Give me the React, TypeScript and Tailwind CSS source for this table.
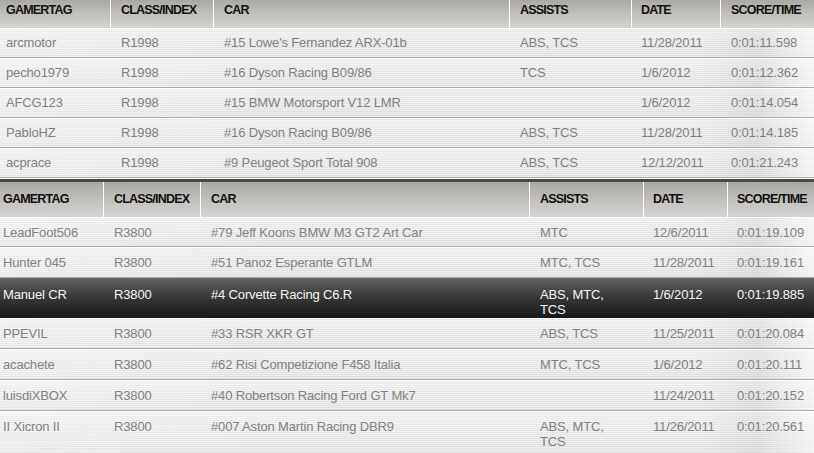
import React from "react";

const ROW_BG =
  "bg-[image:linear-gradient(90deg,rgba(255,255,255,0.25)_0%,rgba(255,255,255,0)_35%,rgba(0,0,0,0)_86%,rgba(0,0,0,0.04)_93%,rgba(255,255,255,0.55)_100%),repeating-linear-gradient(180deg,rgba(255,255,255,0.45)_0px,rgba(255,255,255,0.45)_1px,rgba(0,0,0,0)_1px,rgba(0,0,0,0)_2px),linear-gradient(180deg,#ebebeb,#dddddd)]";
const DARK_BG =
  "bg-[image:linear-gradient(180deg,#636363_0%,#3a3a3a_45%,#181818_100%)]";
const HEAD_BG =
  "bg-[image:linear-gradient(180deg,#aaa8a3_0%,#c4c2be_55%,#d6d4d1_100%)]";

const HEADERS = ["GAMERTAG", "CLASS/INDEX", "CAR", "ASSISTS", "DATE", "SCORE/TIME"];

const topCols = [
  "w-[110px] pl-[6px]",
  "w-[103px] pl-[11px]",
  "w-[296px] pl-[11px]",
  "w-[122px] pl-[11px]",
  "w-[89px] pl-[10px]",
  "w-[94px] pl-[11px]",
];
const topHeadCols = [
  "w-[110px] pl-[6px]",
  "w-[103px] pl-[10px] border-l border-white",
  "w-[296px] pl-[10px] border-l border-white",
  "w-[122px] pl-[10px] border-l border-white",
  "w-[89px] pl-[9px] border-l border-white",
  "w-[94px] pl-[10px] border-l border-white",
];
const botCols = [
  "w-[103px] pl-[3px]",
  "w-[97px] pl-[11px]",
  "w-[329px] pl-[11px]",
  "w-[114px] pl-[11px] pr-[24px]",
  "w-[84px] pl-[10px]",
  "w-[87px] pl-[10px]",
];
const botHeadCols = [
  "w-[103px] pl-[3px]",
  "w-[97px] pl-[10px] border-l border-white",
  "w-[329px] pl-[10px] border-l border-white",
  "w-[114px] pl-[10px] border-l border-white",
  "w-[84px] pl-[9px] border-l border-white",
  "w-[87px] pl-[9px] border-l border-white",
];

type Row = { cells: string[]; h: string; pt: string; dark?: boolean };

const topRows: Row[] = [
  { cells: ["arcmotor", "R1998", "#15 Lowe's Fernandez ARX-01b", "ABS, TCS", "11/28/2011", "0:01:11.598"], h: "h-[30px]", pt: "pt-[7px]" },
  { cells: ["pecho1979", "R1998", "#16 Dyson Racing B09/86", "TCS", "1/6/2012", "0:01:12.362"], h: "h-[30px]", pt: "pt-[7px]" },
  { cells: ["AFCG123", "R1998", "#15 BMW Motorsport V12 LMR", "", "1/6/2012", "0:01:14.054"], h: "h-[30px]", pt: "pt-[7px]" },
  { cells: ["PabloHZ", "R1998", "#16 Dyson Racing B09/86", "ABS, TCS", "11/28/2011", "0:01:14.185"], h: "h-[30px]", pt: "pt-[7px]" },
  { cells: ["acprace", "R1998", "#9 Peugeot Sport Total 908", "ABS, TCS", "12/12/2011", "0:01:21.243"], h: "h-[30px]", pt: "pt-[7px]" },
];

const botRows: Row[] = [
  { cells: ["LeadFoot506", "R3800", "#79 Jeff Koons BMW M3 GT2 Art Car", "MTC", "12/6/2011", "0:01:19.109"], h: "h-[30px]", pt: "pt-[8px]" },
  { cells: ["Hunter 045", "R3800", "#51 Panoz Esperante GTLM", "MTC, TCS", "11/28/2011", "0:01:19.161"], h: "h-[31px]", pt: "pt-[8px]" },
  { cells: ["Manuel CR", "R3800", "#4 Corvette Racing C6.R", "ABS, MTC, TCS", "1/6/2012", "0:01:19.885"], h: "h-[40px]", pt: "pt-[9px]", dark: true },
  { cells: ["PPEVIL", "R3800", "#33 RSR XKR GT", "ABS, TCS", "11/25/2011", "0:01:20.084"], h: "h-[31px]", pt: "pt-[8px]" },
  { cells: ["acachete", "R3800", "#62 Risi Competizione F458 Italia", "MTC, TCS", "1/6/2012", "0:01:20.111"], h: "h-[31px]", pt: "pt-[8px]" },
  { cells: ["luisdiXBOX", "R3800", "#40 Robertson Racing Ford GT Mk7", "", "11/24/2011", "0:01:20.152"], h: "h-[31px]", pt: "pt-[8px]" },
  { cells: ["II Xicron II", "R3800", "#007 Aston Martin Racing DBR9", "ABS, MTC, TCS", "11/26/2011", "0:01:20.561"], h: "h-[46px]", pt: "pt-[8px]" },
];

function BodyRow({ row, cols }: { row: Row; cols: string[] }) {
  return (
    <div
      className={`flex ${row.h} ${row.pt} ${
        row.dark
          ? `${DARK_BG} text-[#f4f4f4]`
          : `${ROW_BG} text-[#828282] border-b border-[#ababab] shadow-[inset_0_1px_0_rgba(255,255,255,0.9)]`
      }`}
    >
      {row.cells.map((c, i) => (
        <div key={i} className={`${cols[i]} shrink-0 text-[13px] leading-[15px] tracking-[-0.15px]`}>
          {c}
        </div>
      ))}
    </div>
  );
}

export default function App() {
  return (
    <div className="w-[814px] h-[453px] overflow-hidden bg-[#e4e4e4] font-['Liberation_Sans',Arial,sans-serif]">
      {/* Top table */}
      <div className={`flex h-[28px] ${HEAD_BG}`}>
        {HEADERS.map((h, i) => (
          <div
            key={h}
            className={`${topHeadCols[i]} shrink-0 pt-[4px] text-[12.5px] leading-[13px] font-bold text-[#111] tracking-[-0.8px]`}
          >
            {h}
          </div>
        ))}
      </div>
      {topRows.map((r, i) => (
        <BodyRow key={i} row={r} cols={topCols} />
      ))}
      <div className="h-[1px] bg-white" />
      <div className="h-[3px] bg-[#4a4a4a]" />

      {/* Bottom table */}
      <div className={`flex h-[35px] ${HEAD_BG}`}>
        {HEADERS.map((h, i) => (
          <div
            key={h}
            className={`${botHeadCols[i]} shrink-0 flex items-center text-[12.5px] leading-[13px] font-bold text-[#111] tracking-[-0.8px]`}
          >
            {h}
          </div>
        ))}
      </div>
      {botRows.map((r, i) => (
        <BodyRow key={i} row={r} cols={botCols} />
      ))}
    </div>
  );
}
